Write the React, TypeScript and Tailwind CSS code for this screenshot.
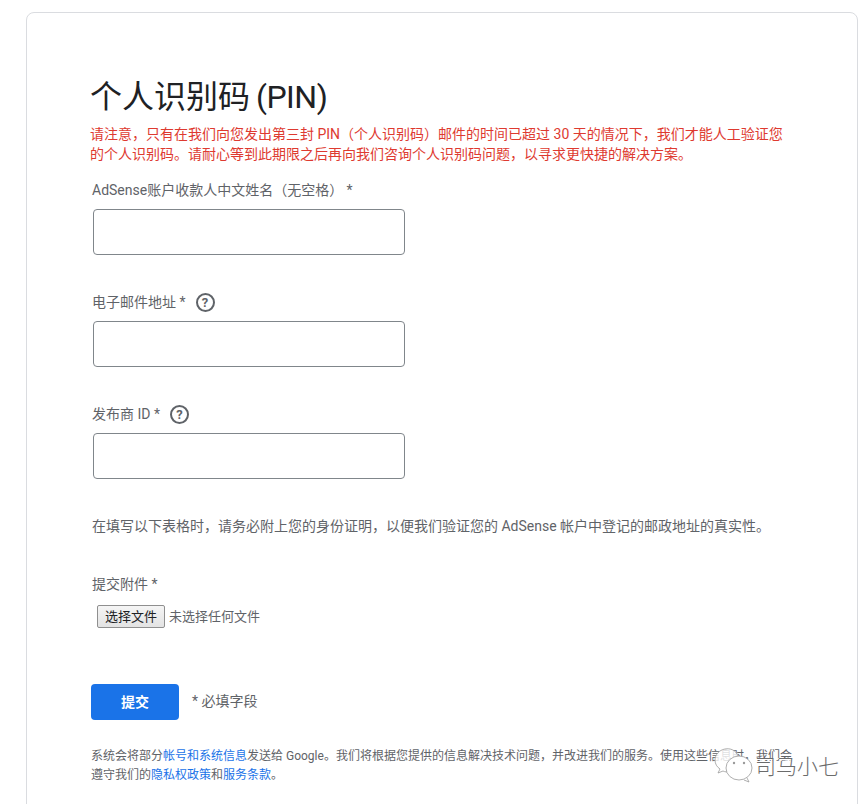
import React from "react";

const font = { fontFamily: '"Roboto", "Noto Sans CJK SC", sans-serif' };

function Help() {
  return (
    <span className="ml-[10px] inline-flex h-[19px] w-[19px] items-center justify-center rounded-full border-2 border-[#5f6368] text-[13px] font-bold leading-none text-[#5f6368]">
      ?
    </span>
  );
}

function Field({ label, help, mb }: { label: string; help?: boolean; mb: string }) {
  return (
    <div className={mb}>
      <div className="ml-[2px] flex h-5 items-center text-[14px] text-[#5f6368]">
        <span>{label}</span>
        {help && <Help />}
      </div>
      <input
        type="text"
        className="ml-[3px] mt-[9px] block h-[46px] w-[312px] rounded-[4px] border border-[#80868b] bg-white"
      />
    </div>
  );
}

export default function App() {
  return (
    <div className="relative h-[804px] w-[865px] overflow-hidden bg-white" style={font}>
      <div className="ml-[26px] mt-3 h-[840px] w-[832px] rounded-[8px] border border-[#dadce0] bg-white pl-[63px] pt-[64px]">
        <h1 className="h-[40px] text-[32px] font-normal leading-[40px] text-[#202124]">
          个人识别码 <span className="-ml-[2px] tracking-[-0.5px]">(PIN)</span>
        </h1>
        <p className="mt-[7px] w-[700px] text-[14px] leading-[20px] text-[#de3a30]">
          请注意，只有在我们向您发出第三封 PIN（个人识别码）邮件的时间已超过 30 天的情况下，我们才能人工验证您的个人识别码。请耐心等到此期限之后再向我们咨询个人识别码问题，以寻求更快捷的解决方案。
        </p>
        <div className="mt-[16px]">
          <Field label="AdSense账户收款人中文姓名（无空格） *" mb="mb-[37px]" />
          <Field label="电子邮件地址 *" help mb="mb-[37px]" />
          <Field label="发布商 ID *" help mb="mb-0" />
        </div>
        <p className="ml-[2px] mt-[37px] h-5 text-[14px] leading-[20px] text-[#5f6368]">
          在填写以下表格时，请务必附上您的身份证明，以便我们验证您的 AdSense 帐户中登记的邮政地址的真实性。
        </p>
        <div className="ml-[2px] mt-[38px] h-5 text-[14px] leading-[20px] text-[#5f6368]">提交附件 *</div>
        <div className="ml-[7px] mt-[11px] flex h-[23px] items-center">
          <button
            type="button"
            className="h-[23px] w-[68px] rounded-[2px] border border-[#8f8f8f] bg-gradient-to-b from-[#f5f5f5] to-[#e3e3e3] text-center text-[13px] leading-none text-[#202124]"
          >
            选择文件
          </button>
          <span className="ml-[4px] text-[13px] text-[#5f6368]">未选择任何文件</span>
        </div>
        <div className="ml-[1px] mt-[56px] flex items-center">
          <button
            type="button"
            className="h-[36px] w-[88px] rounded-[4px] bg-[#1a73e8] text-[14px] font-bold text-white"
          >
            提交
          </button>
          <span className="ml-[13px] -translate-y-[1px] text-[14px] text-[#5f6368]">* 必填字段</span>
        </div>
        <p className="ml-[1px] mt-[27px] w-[710px] text-[12px] leading-[19px] text-[#5f6368]">
          系统会将部分<a className="text-[#1a73e8]">帐号和系统信息</a>发送给 Google。我们将根据您提供的信息解决技术问题，并改进我们的服务。使用这些信息时，我们会遵守我们的<a className="text-[#1a73e8]">隐私权政策</a>和<a className="text-[#1a73e8]">服务条款</a>。
        </p>
      </div>

      <div className="absolute left-[712px] top-[745px] flex items-center">
        <svg width="44" height="40" viewBox="0 0 44 40" fill="none" stroke="#9a9a9a" strokeWidth="0.8">
          <path d="M26 11C24 5 18 3 13 4 7 5 3 10 3 15c0 4 2 7 5 9l-2 4 5-2c2 1 4 1 6 1" fill="#ffffff" fillOpacity="0.8" />
          <ellipse cx="27" cy="23" rx="13" ry="12" fill="#ffffff" />
          <path d="M35 33l2 4-5-2" fill="#ffffff" />
          <circle cx="22" cy="18" r="1.2" fill="#9a9a9a" stroke="none" />
          <circle cx="32" cy="18" r="1.2" fill="#9a9a9a" stroke="none" />
        </svg>
      </div>
      <div className="absolute left-[755px] top-[752px] text-[21px] font-light leading-[30px] text-[#6b6b6b] [text-shadow:1px_1px_0_#ffffff,-1px_0_0_#ffffff]">
        司马小七
      </div>
    </div>
  );
}
